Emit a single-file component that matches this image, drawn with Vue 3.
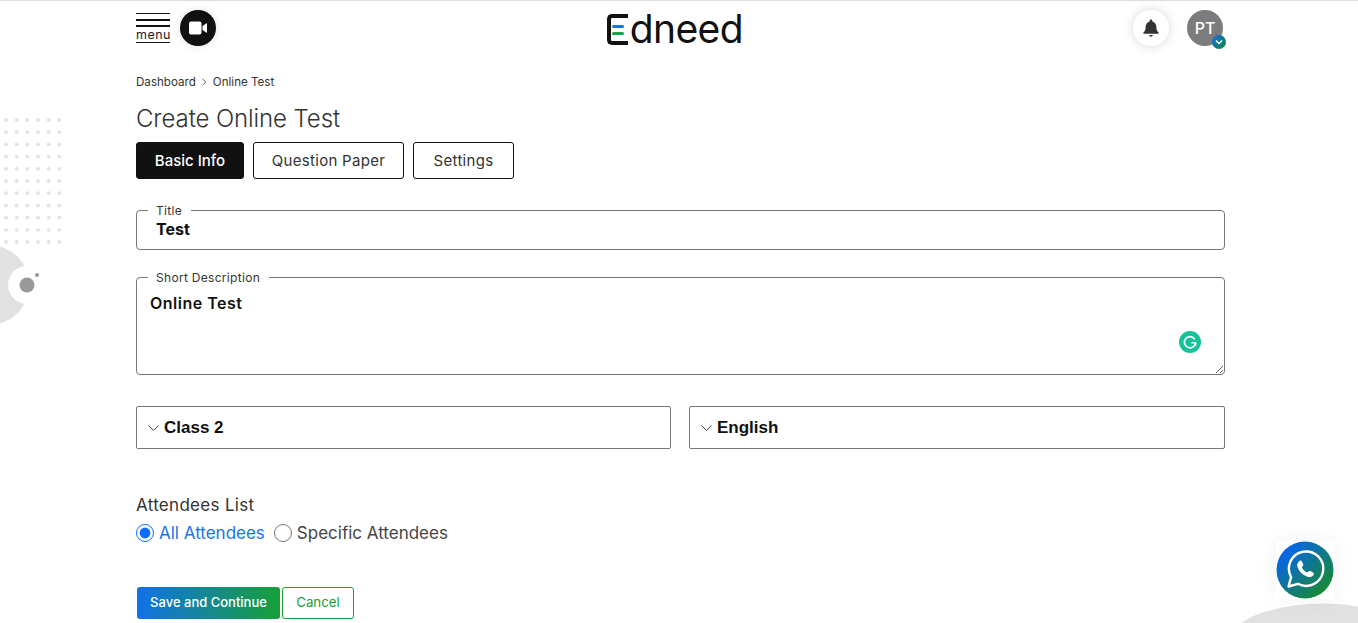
<template>
  <div class="page">
    <svg class="dots" width="66" height="136" viewBox="0 0 66 136">
      <template v-for="r in 11" :key="r">
        <circle v-for="c in 6" :key="c" :cx="6 + (c - 1) * 10.67" :cy="4 + (r - 1) * 12.2" r="1.9" fill="#e2e2e2" />
      </template>
    </svg>
    <svg class="blob-left" width="50" height="90" viewBox="0 0 50 90">
      <circle cx="-10" cy="45" r="39.5" fill="#e1e1e1" />
      <circle cx="27" cy="45" r="19" fill="#fff" />
      <circle cx="27" cy="45" r="7.5" fill="#999" />
      <circle cx="37" cy="35" r="2" fill="#999" />
    </svg>
    <div class="blob-right"></div>
    <div class="whatsapp">
      <svg width="58" height="58" viewBox="0 0 58 58">
        <defs>
          <linearGradient id="wa" x1="0" y1="0" x2="1" y2="1">
            <stop offset="0.15" stop-color="#0565e8" />
            <stop offset="0.85" stop-color="#188a35" />
          </linearGradient>
        </defs>
        <circle cx="29" cy="29" r="28.5" fill="url(#wa)" />
        <path d="M12.5 45.5l2.6-9.4a17.2 17.2 0 1 1 6.8 6.7z" fill="none" stroke="#fff" stroke-width="2.4" stroke-linejoin="round" />
        <path d="M23 20.2c.7-.7 2-.9 2.6 0l1.6 2.9c.3.6.2 1.2-.2 1.7l-1.2 1.4c1.1 2.4 3 4.3 5.5 5.4l1.5-1.3c.5-.4 1.1-.5 1.7-.2l2.8 1.6c.8.5.8 1.7.1 2.5-1.3 1.5-3.2 2.2-5.1 1.7-5.4-1.3-9.7-5.5-11-10.8-.4-1.9.8-3.7 1.8-4.9z" fill="#fff" />
      </svg>
    </div>

    <div class="container">
      <header class="topbar">
        <div class="top-left">
          <div class="menu">
            <span class="bar thin"></span>
            <span class="bar"></span>
            <span class="bar"></span>
            <span class="menu-label">menu</span>
          </div>
          <button class="round dark">
            <svg width="18" height="14" viewBox="0 0 18 14">
              <rect x="0" y="0.5" width="12.5" height="13" rx="2" fill="#fff" />
              <path d="M13.5 5l4.5-3v10l-4.5-3z" fill="#fff" />
            </svg>
          </button>
        </div>
        <div class="logo"><span class="logo-e">E</span>dneed</div>
        <div class="top-right">
          <button class="round light">
            <svg width="16" height="18" viewBox="0 0 18 20">
              <path d="M9 .5c-.9 0-1.5.6-1.5 1.5v.6C4.700 3.300 3 5.700 3 8.500c0 3.500-.8 5-2.500 6.700-.3.3-.3.8 0 1 .1.2.4.3.6.3h15.800c.2 0 .5-.1.6-.3.3-.2.3-.7 0-1C15.800 13.500 15 12 15 8.500c0-2.800-1.700-5.200-4.500-5.900V2c0-.9-.6-1.500-1.500-1.500zM7 18c0 1 .9 1.800 2 1.800s2-.8 2-1.800z" fill="#333" />
            </svg>
          </button>
          <div class="avatar">
            PT
            <span class="badge">
              <svg width="8" height="6" viewBox="0 0 8 6"><path d="M1 1.5l3 3 3-3" fill="none" stroke="#fff" stroke-width="1.4" /></svg>
            </span>
          </div>
        </div>
      </header>

      <nav class="crumbs">
        <span>Dashboard</span>
        <svg width="7" height="8" viewBox="0 0 7 8"><path d="M1.5 .8l3.4 3.2-3.4 3.2" fill="none" stroke="#555" stroke-width=".9" /></svg>
        <span>Online Test</span>
      </nav>

      <h1 class="title">Create Online Test</h1>

      <div class="tabs">
        <button v-for="t in tabs" :key="t" class="tab" :class="{ active: t === tab }">{{ t }}</button>
      </div>

      <fieldset class="field title-field">
        <legend>Title</legend>
        <input class="text-input" value="Test" />
      </fieldset>

      <fieldset class="field desc-field">
        <legend>Short Description</legend>
        <textarea class="text-area" spellcheck="false">Online Test</textarea>
        <span class="grammarly">
          <svg width="22" height="22" viewBox="0 0 22 22">
            <circle cx="11" cy="11" r="11" fill="#15c39a" />
            <path d="M15.8 8.3A5.6 5.6 0 1 0 16.6 11.8h-4.2" fill="none" stroke="#fff" stroke-width="1.6" />
            <path d="M16.5 11.8v3" stroke="#fff" stroke-width="1.6" />
          </svg>
        </span>
      </fieldset>

      <div class="selects">
        <div v-for="s in selects" :key="s" class="select">
          <svg width="11" height="6" viewBox="0 0 11 6"><path d="M.5 .5l5 5 5-5" fill="none" stroke="#444" /></svg>
          <span>{{ s }}</span>
        </div>
      </div>

      <div class="attendees">
        <div class="att-label">Attendees List</div>
        <div class="radios">
          <label class="radio on"><input type="radio" name="att" checked />All Attendees</label>
          <label class="radio"><input type="radio" name="att" />Specific Attendees</label>
        </div>
      </div>

      <div class="actions">
        <button class="save">Save and Continue</button>
        <button class="cancel">Cancel</button>
      </div>
    </div>
  </div>
</template>

<script setup>
import { ref } from 'vue'

const tabs = ['Basic Info', 'Question Paper', 'Settings']
const tab = ref('Basic Info')
const selects = ['Class 2', 'English']
</script>

<style>
html, body {
  margin: 0;
  overflow: hidden;
  background: #fff;
}
</style>

<style scoped>
.page {
  position: relative;
  height: 622px;
  overflow: hidden;
  border-top: 1px solid #ddd;
  font-family: Inter, "Noto Sans", sans-serif;
  color: #222;
}

.dots {
  position: absolute;
  left: 0;
  top: 115px;
}

.blob-left {
  position: absolute;
  left: 0;
  top: 239px;
}

.blob-right {
  position: absolute;
  left: 1236px;
  top: 603px;
  width: 150px;
  height: 60px;
  border-radius: 50% 50% 0 0 / 40% 40% 0 0;
  background: #e1e1e1;
  transform: rotate(-4deg);
}

.whatsapp {
  position: absolute;
  left: 1276px;
  top: 540px;
  width: 58px;
  height: 58px;
  background: #fff;
  box-shadow: 0 0 20px rgba(0, 0, 0, 0.06);
}

.container {
  position: relative;
  width: 1089px;
  margin-left: 136px;
}

.topbar {
  display: flex;
  justify-content: space-between;
  align-items: center;
  height: 54px;
}

.top-left,
.top-right {
  display: flex;
  align-items: center;
}

.top-left {
  gap: 10px;
  align-self: stretch;
}

.top-right {
  gap: 18px;
  width: 92px;
  justify-content: flex-start;
}

.menu {
  width: 34px;
  display: flex;
  flex-direction: column;
  align-self: flex-start;
  margin-top: 12px;
}

.bar {
  height: 2px;
  background: #111;
  margin-bottom: 4px;
}

.bar.thin {
  height: 1px;
  margin-bottom: 5px;
}

.menu-label {
  font-size: 12.5px;
  line-height: 14px;
  border-bottom: 1px solid #111;
  letter-spacing: 0.5px;
  margin-top: -3px;
}

.round {
  width: 36px;
  height: 36px;
  border: 0;
  border-radius: 50%;
  padding: 0;
  display: flex;
  align-items: center;
  justify-content: center;
}

.round.dark {
  background: #111;
  box-shadow: 0 0 8px rgba(0, 0, 0, 0.12);
}

.round.light {
  background: #fff;
  box-shadow: 0 0 12px rgba(0, 0, 0, 0.16);
}

.logo {
  width: 137px;
  font-size: 39px;
  line-height: 40px;
  font-weight: 400;
  color: #111;
  display: flex;
  align-items: center;
  letter-spacing: -0.6px;
  margin-top: 2px;
}

.logo-e {
  position: relative;
  width: 21px;
  height: 31px;
  margin-left: 1px;
  margin-right: 2px;
  color: transparent;
  overflow: hidden;
  border: 4px solid #111;
  border-right: 0;
  border-radius: 5px 0 0 5px;
  box-sizing: border-box;
  font-size: 10px;
  line-height: 10px;
}

.logo-e::before,
.logo-e::after {
  content: "";
  position: absolute;
  left: 1px;
  width: 12px;
  height: 3px;
  border-radius: 2px;
}

.logo-e::before {
  top: 7px;
  background: #1a73e8;
}

.logo-e::after {
  top: 14px;
  background: #16a34a;
}

.avatar {
  position: relative;
  width: 36px;
  height: 36px;
  border-radius: 50%;
  background: #7c7c7c;
  color: #fff;
  font-weight: 500;
  font-size: 16px;
  display: flex;
  align-items: center;
  justify-content: center;
}

.badge {
  position: absolute;
  left: 25px;
  top: 25px;
  width: 14px;
  height: 14px;
  border-radius: 50%;
  background: linear-gradient(135deg, #0a6ee8, #18873a);
  display: flex;
  align-items: center;
  justify-content: center;
}

.crumbs {
  display: flex;
  align-items: center;
  gap: 5px;
  margin-top: 19px;
  height: 16px;
  font-size: 11.6px;
  color: #333;
}

.title {
  margin: 13px 0 0;
  font-size: 24px;
  line-height: 32px;
  font-weight: 300;
  color: #333;
  letter-spacing: -0.1px;
}

.tabs {
  display: grid;
  grid-template-columns: 108px 151px 101px;
  gap: 9px;
  margin-top: 7px;
}

.tab {
  height: 37px;
  padding: 0;
  border: 1px solid #111;
  border-radius: 3px;
  background: #fff;
  font-family: inherit;
  font-size: 15px;
  letter-spacing: 0.3px;
  color: #333;
}

.tab.active {
  background: #111;
  color: #fff;
  font-weight: 500;
  letter-spacing: 0;
}

.field {
  margin: 0;
  padding: 0;
  border: 1px solid #777;
  border-radius: 4px;
  min-width: 0;
  position: relative;
}

.field legend {
  margin-left: 11px;
  padding: 0 9px 0 8px;
  font-size: 12px;
  line-height: 13px;
  letter-spacing: 0.3px;
  color: #333;
}

.title-field {
  margin-top: 25px;
  height: 46px;
  box-sizing: border-box;
}

.text-input {
  display: block;
  width: 100%;
  box-sizing: border-box;
  height: 24px;
  border: 0;
  outline: 0;
  padding: 0 19px;
  background: transparent;
  font-family: inherit;
  font-size: 16px;
  font-weight: 700;
  color: #111;
}

.desc-field {
  margin-top: 21px;
  height: 104px;
  box-sizing: border-box;
}

.text-area {
  display: block;
  width: 100%;
  height: 90px;
  box-sizing: border-box;
  border: 0;
  outline: 0;
  padding: 9px 13px;
  background: transparent;
  font-family: inherit;
  font-size: 16px;
  font-weight: 600;
  letter-spacing: 0.5px;
  color: #111;
}

.grammarly {
  position: absolute;
  right: 23px;
  bottom: 21px;
  width: 22px;
  height: 22px;
}

.selects {
  display: grid;
  grid-template-columns: 535px 536px;
  column-gap: 18px;
  margin-top: 31px;
}

.select {
  height: 43px;
  box-sizing: border-box;
  border: 1px solid #777;
  border-radius: 2px;
  display: flex;
  align-items: center;
  gap: 5px;
  padding-left: 11px;
  font-family: "Liberation Sans", Arial, sans-serif;
  font-size: 17px;
  font-weight: 700;
  color: #111;
}

.attendees {
  margin-top: 45px;
}

.att-label {
  font-size: 17px;
  line-height: 22px;
  letter-spacing: 0.3px;
  color: #333;
}

.radios {
  display: flex;
  gap: 9px;
  margin-top: 5px;
}

.radio {
  display: flex;
  align-items: center;
  gap: 5px;
  font-size: 17px;
  line-height: 24px;
  color: #444;
}

.radio.on {
  color: #1a73e8;
}

.radio input {
  margin: 0;
  width: 18px;
  height: 18px;
  accent-color: #0d6efd;
}

.actions {
  display: flex;
  gap: 2px;
  margin-top: 42px;
  margin-left: 1px;
}

.save {
  width: 143px;
  height: 32px;
  border: 0;
  border-radius: 3px;
  background: linear-gradient(90deg, #1172e8, #17a036);
  color: #fff;
  font-family: inherit;
  font-size: 13px;
  font-weight: 500;
  padding: 0 0 2px;
}

.cancel {
  width: 72px;
  height: 32px;
  border: 1px solid #17a036;
  border-radius: 3px;
  background: #fff;
  color: #17a036;
  font-family: inherit;
  font-size: 13.3px;
  padding: 0 0 2px;
}
</style>
